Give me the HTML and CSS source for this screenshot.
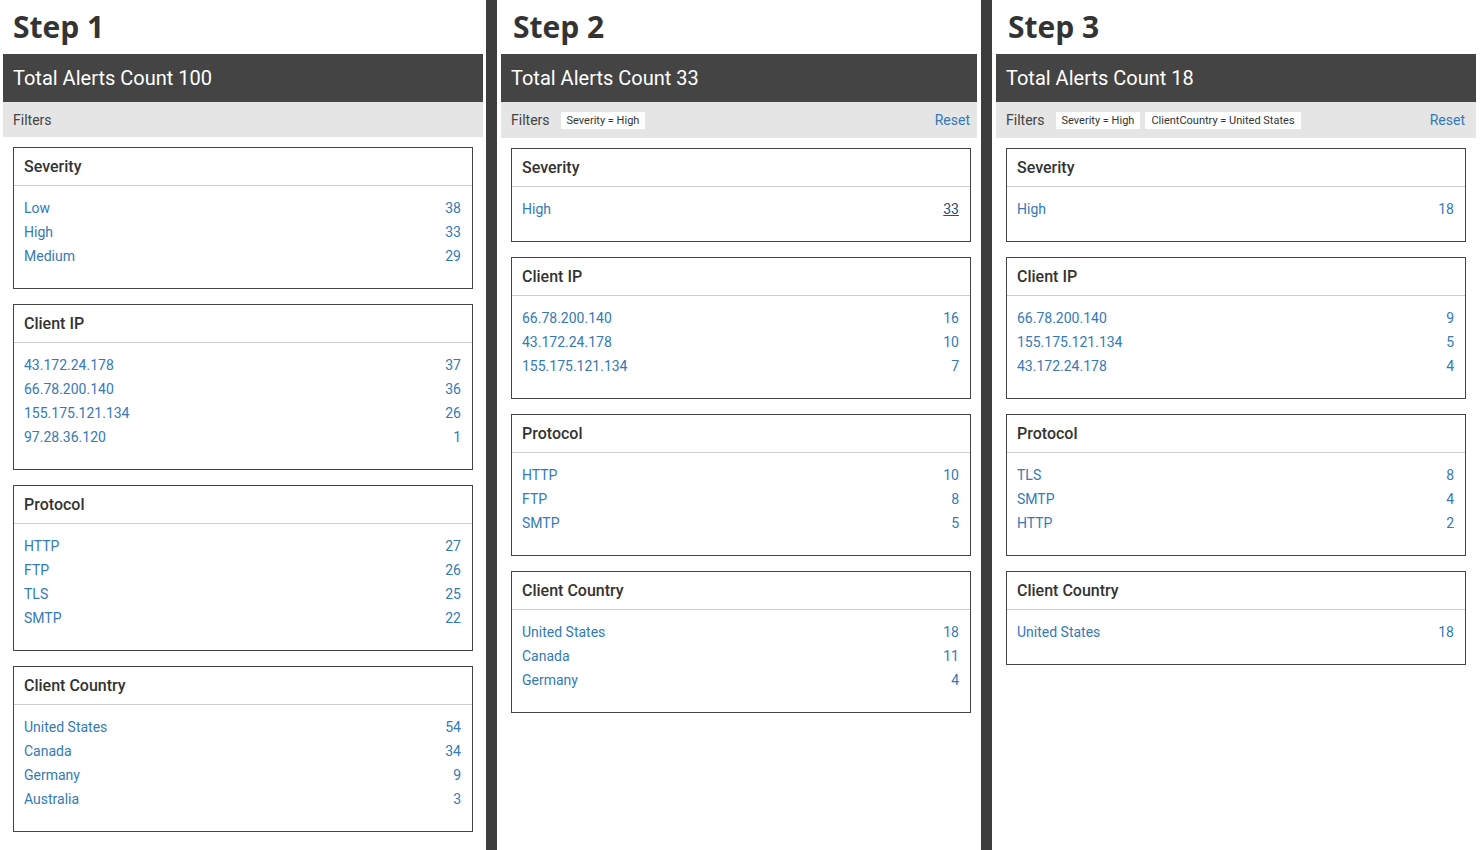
FILE: index.html
```html
<!DOCTYPE html>
<html lang="en">
<head>
<meta charset="utf-8">
<title>Alerts filtering steps</title>
<link rel="stylesheet" href="styles.css">
</head>
<body>
<div class="board">
  <section class="panel panel-1">
    <h1 class="step">Step 1</h1>
    <div class="total">Total Alerts Count 100</div>
    <div class="filters">
      <span class="filters-label">Filters</span>
    </div>
    <div class="card">
      <div class="card-title">Severity</div>
      <ul class="card-list">
        <li><a>Low</a><a>38</a></li>
        <li><a>High</a><a>33</a></li>
        <li><a>Medium</a><a>29</a></li>
      </ul>
    </div>
    <div class="card">
      <div class="card-title">Client IP</div>
      <ul class="card-list">
        <li><a>43.172.24.178</a><a>37</a></li>
        <li><a>66.78.200.140</a><a>36</a></li>
        <li><a>155.175.121.134</a><a>26</a></li>
        <li><a>97.28.36.120</a><a>1</a></li>
      </ul>
    </div>
    <div class="card">
      <div class="card-title">Protocol</div>
      <ul class="card-list">
        <li><a>HTTP</a><a>27</a></li>
        <li><a>FTP</a><a>26</a></li>
        <li><a>TLS</a><a>25</a></li>
        <li><a>SMTP</a><a>22</a></li>
      </ul>
    </div>
    <div class="card">
      <div class="card-title">Client Country</div>
      <ul class="card-list">
        <li><a>United States</a><a>54</a></li>
        <li><a>Canada</a><a>34</a></li>
        <li><a>Germany</a><a>9</a></li>
        <li><a>Australia</a><a>3</a></li>
      </ul>
    </div>
  </section>

  <div class="divider"></div>

  <section class="panel panel-2">
    <h1 class="step">Step 2</h1>
    <div class="total">Total Alerts Count 33</div>
    <div class="filters filters-active">
      <span class="filters-label">Filters</span>
      <span class="chip">Severity = High</span>
      <a class="reset">Reset</a>
    </div>
    <div class="card">
      <div class="card-title">Severity</div>
      <ul class="card-list">
        <li><a>High</a><a class="hover">33</a></li>
      </ul>
    </div>
    <div class="card">
      <div class="card-title">Client IP</div>
      <ul class="card-list">
        <li><a>66.78.200.140</a><a>16</a></li>
        <li><a>43.172.24.178</a><a>10</a></li>
        <li><a>155.175.121.134</a><a>7</a></li>
      </ul>
    </div>
    <div class="card">
      <div class="card-title">Protocol</div>
      <ul class="card-list">
        <li><a>HTTP</a><a>10</a></li>
        <li><a>FTP</a><a>8</a></li>
        <li><a>SMTP</a><a>5</a></li>
      </ul>
    </div>
    <div class="card">
      <div class="card-title">Client Country</div>
      <ul class="card-list">
        <li><a>United States</a><a>18</a></li>
        <li><a>Canada</a><a>11</a></li>
        <li><a>Germany</a><a>4</a></li>
      </ul>
    </div>
  </section>

  <div class="divider"></div>

  <section class="panel panel-3">
    <h1 class="step">Step 3</h1>
    <div class="total">Total Alerts Count 18</div>
    <div class="filters filters-active">
      <span class="filters-label">Filters</span>
      <span class="chip">Severity = High</span>
      <span class="chip">ClientCountry = United States</span>
      <a class="reset">Reset</a>
    </div>
    <div class="card">
      <div class="card-title">Severity</div>
      <ul class="card-list">
        <li><a>High</a><a>18</a></li>
      </ul>
    </div>
    <div class="card">
      <div class="card-title">Client IP</div>
      <ul class="card-list">
        <li><a>66.78.200.140</a><a>9</a></li>
        <li><a>155.175.121.134</a><a>5</a></li>
        <li><a>43.172.24.178</a><a>4</a></li>
      </ul>
    </div>
    <div class="card">
      <div class="card-title">Protocol</div>
      <ul class="card-list">
        <li><a>TLS</a><a>8</a></li>
        <li><a>SMTP</a><a>4</a></li>
        <li><a>HTTP</a><a>2</a></li>
      </ul>
    </div>
    <div class="card">
      <div class="card-title">Client Country</div>
      <ul class="card-list">
        <li><a>United States</a><a>18</a></li>
      </ul>
    </div>
  </section>
</div>
</body>
</html>
```

FILE: styles.css
```css
* {
  box-sizing: border-box;
}

html, body {
  margin: 0;
  padding: 0;
  background: #ffffff;
}

body {
  font-family: Roboto, "Liberation Sans", Arial, sans-serif;
  color: #333333;
  font-size: 14px;
}

.board {
  display: grid;
  grid-template-columns: 486px 11px 484px 11px 491px;
  height: 850px;
  overflow: hidden;
}

.divider {
  background: #3d3d3d;
}

.panel {
  display: flex;
  flex-direction: column;
  min-width: 0;
}

.panel-1 {
  padding: 0 3px;
}

.panel-2 {
  padding: 0 4px;
}

.panel-3 {
  padding: 0 7px 0 4px;
}

.step {
  margin: 0;
  height: 54px;
  padding: 7px 0 0 10px;
  font-family: "Open Sans", "Liberation Sans", sans-serif;
  font-weight: 700;
  font-size: 30px;
  line-height: 40px;
  color: #333333;
}

.panel-2 .step,
.panel-3 .step {
  padding-left: 12px;
}

.total {
  height: 48px;
  line-height: 48px;
  background: #444444;
  color: #ffffff;
  font-size: 20px;
  padding-left: 10px;
}

.filters {
  display: flex;
  align-items: center;
  height: 35px;
  background: #e5e5e5;
  padding: 0 7px 0 10px;
  color: #444444;
}

.filters-active {
  height: 36px;
}

.panel-3 .filters {
  padding-right: 11px;
}

.filters-label {
  font-size: 14px;
  margin-right: 11px;
}

.chip {
  background: #ffffff;
  color: #333333;
  font-size: 11px;
  height: 17px;
  line-height: 17px;
  padding: 0 6px;
  margin-right: 5px;
}

.reset {
  margin-left: auto;
  color: #337ab7;
  font-size: 14px;
}

.card {
  width: 460px;
  margin: 10px 0 5px 10px;
  border: 1px solid #444444;
}

.card-title {
  height: 38px;
  line-height: 37px;
  padding-left: 10px;
  font-size: 16px;
  font-weight: 500;
  color: #333333;
  border-bottom: 1px solid #cccccc;
}

.card-list {
  list-style: none;
  margin: 0;
  padding: 10px 11px 20px 10px;
}

.card-list li {
  display: flex;
  justify-content: space-between;
  height: 24px;
  line-height: 24px;
}

.card-list a {
  color: #337ab7;
  font-size: 14px;
}

.card-list a.hover {
  color: #23527c;
  text-decoration: underline;
}
```
